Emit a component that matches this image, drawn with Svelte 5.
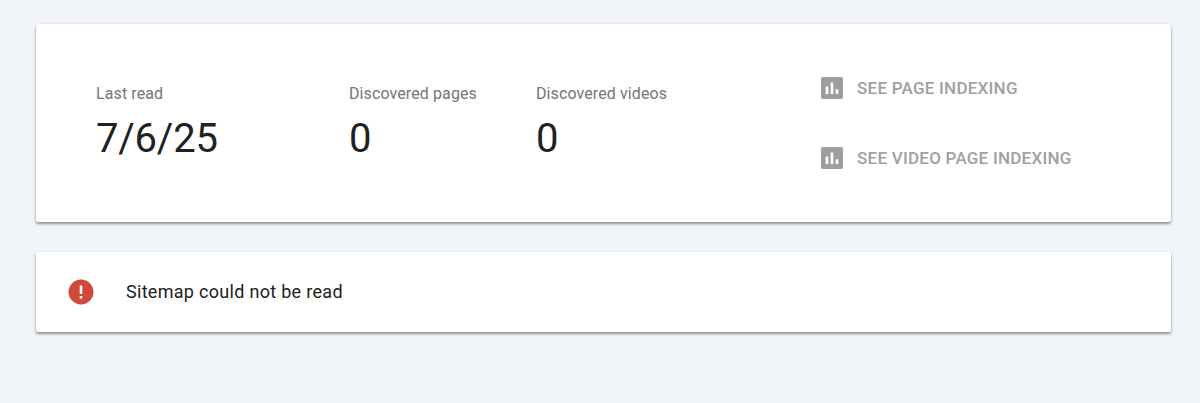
<script>
  const stats = [
    { label: 'Last read', value: '7/6/25', width: 253 },
    { label: 'Discovered pages', value: '0', width: 187 },
    { label: 'Discovered videos', value: '0', width: 284 }
  ];
  const links = ['SEE PAGE INDEXING', 'SEE VIDEO PAGE INDEXING'];
</script>

<main class="page">
  <section class="card summary">
    <div class="stats">
      {#each stats as stat}
        <div class="stat" style="width: {stat.width}px">
          <div class="label">{stat.label}</div>
          <div class="value">{stat.value}</div>
        </div>
      {/each}
    </div>
    <div class="links">
      {#each links as link}
        <div class="link">
          <svg width="24" height="24" viewBox="0 0 24 24" aria-hidden="true">
            <path fill="#9e9e9e" d="M3 1h18a2 2 0 0 1 2 2v18a2 2 0 0 1-2 2H3a2 2 0 0 1-2-2V3a2 2 0 0 1 2-2z" />
            <path fill="#fff" d="M5.7 10.5h2.6V18H5.7zM10.7 6.5h2.6V18h-2.6zM15.7 13.3h2.6V18h-2.6z" />
          </svg>
          <span>{link}</span>
        </div>
      {/each}
    </div>
  </section>

  <section class="card message">
    <svg class="error" width="26" height="26" viewBox="0 0 26 26" aria-hidden="true">
      <circle cx="13" cy="13" r="12.5" fill="#cf4a3a" />
      <path fill="#fff" d="M11.7 6.5h2.6v8.5h-2.6zM11.7 17h2.6v2.6h-2.6z" />
    </svg>
    <span class="message-text">Sitemap could not be read</span>
  </section>
</main>

<style>
  :global(body) {
    margin: 0;
    background: #f1f4f9;
  }

  .page {
    display: flex;
    flex-direction: column;
    gap: 30px;
    height: 403px;
    box-sizing: border-box;
    padding: 24px 29px 0 36px;
    font-family: Roboto, "Liberation Sans", sans-serif;
  }

  .card {
    display: flex;
    background: #fff;
    border-radius: 2px;
    box-shadow: 0 2px 3px rgba(0, 0, 0, 0.4), 0 0 2px rgba(0, 0, 0, 0.08);
  }

  .summary {
    height: 198px;
    box-sizing: border-box;
    padding: 60px 0 0 60px;
  }

  .stats {
    display: flex;
  }

  .label {
    font-size: 16px;
    line-height: 20px;
    letter-spacing: 0.1px;
    color: #757575;
  }

  .value {
    margin-top: 11px;
    font-size: 40px;
    line-height: 48px;
    letter-spacing: -0.2px;
    color: #212121;
  }

  .links {
    display: flex;
    flex-direction: column;
    gap: 46px;
    margin-top: -8px;
  }

  .link {
    display: flex;
    align-items: center;
    gap: 13px;
    font-size: 17px;
    font-weight: 500;
    letter-spacing: 0.24px;
    color: #a0a0a0;
  }

  .message {
    align-items: center;
    gap: 32px;
    height: 80px;
    padding-left: 32px;
    font-size: 18px;
    letter-spacing: 0.3px;
    color: #212121;
  }

  .message-text {
    margin-bottom: 2px;
  }
</style>
